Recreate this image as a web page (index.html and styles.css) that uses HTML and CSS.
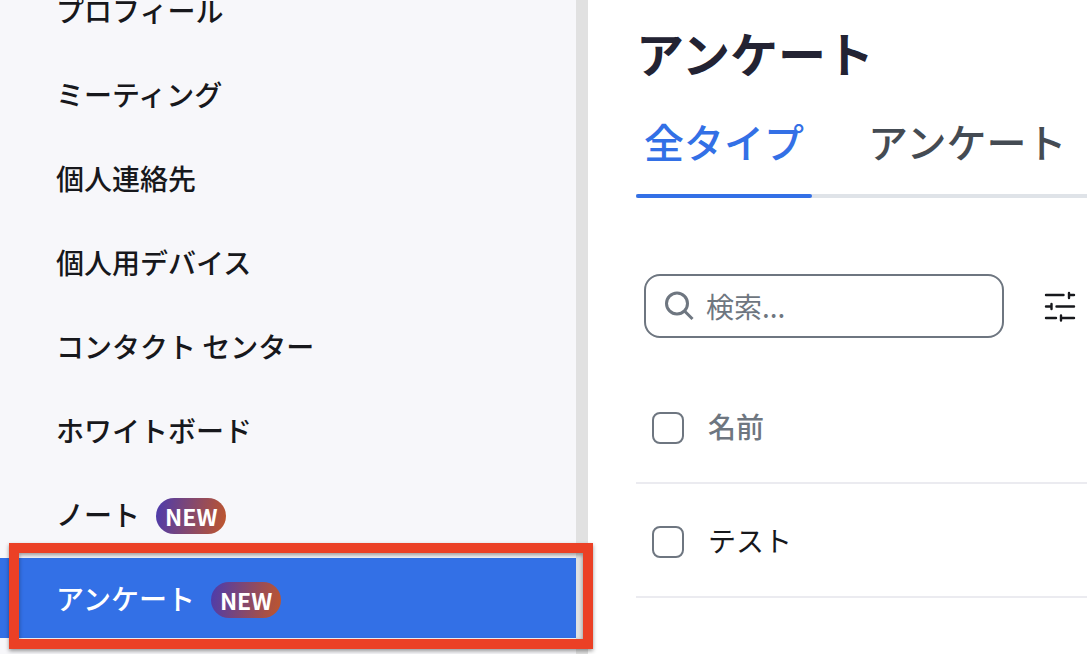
FILE: index.html
```html
<!DOCTYPE html>
<html lang="ja">
<head>
<meta charset="utf-8">
<meta name="viewport" content="width=device-width, initial-scale=1">
<title>アンケート</title>
<link rel="stylesheet" href="styles.css">
</head>
<body>
<div class="layout">
  <nav class="sidebar" aria-label="メニュー">
    <ul class="menu">
      <li><a class="menu-link" href="#">プロフィール</a></li>
      <li><a class="menu-link" href="#">ミーティング</a></li>
      <li><a class="menu-link" href="#">個人連絡先</a></li>
      <li><a class="menu-link" href="#">個人用デバイス</a></li>
      <li><a class="menu-link" href="#">コンタクト センター</a></li>
      <li><a class="menu-link" href="#">ホワイトボード</a></li>
      <li><a class="menu-link" href="#">ノート<span class="badge">NEW</span></a></li>
      <li class="highlighted"><a class="menu-link active" href="#" aria-current="page">アンケート<span class="badge">NEW</span></a></li>
    </ul>
  </nav>
  <main class="content">
    <h1 class="title">アンケート</h1>
    <div class="tabs" role="tablist">
      <button class="tab selected" type="button" role="tab" aria-selected="true">全タイプ</button>
      <button class="tab" type="button" role="tab" aria-selected="false">アンケート</button>
    </div>
    <div class="toolbar">
      <label class="search">
        <svg class="search-icon" viewBox="0 0 32 32" aria-hidden="true"><circle cx="13" cy="13.500" r="10.5"/><path d="M20.500 21 28.500 29"/></svg>
        <input class="search-input" type="search" placeholder="検索..." aria-label="検索">
      </label>
      <button class="filter" type="button" aria-label="フィルター">
        <svg class="filter-icon" viewBox="0 0 32 32" aria-hidden="true"><path d="M2 5H19.500M25 3V8M25 5H30M2 16.500H7.500M7.500 14V19M12.500 16.500H30M2 28H12M17 25.500V30.500M17 28H30"/></svg>
      </button>
    </div>
    <table class="table">
      <thead>
        <tr><th class="check-cell"><input class="check" type="checkbox" aria-label="すべて選択"></th><th class="name">名前</th></tr>
      </thead>
      <tbody>
        <tr><td class="check-cell"><input class="check" type="checkbox" aria-label="テストを選択"></td><td class="name">テスト</td></tr>
      </tbody>
    </table>
  </main>
</div>
</body>
</html>
```

FILE: styles.css
```css
* { box-sizing: border-box; }

body {
  margin: 0;
  overflow: hidden;
  background: #fff;
  color: #17181c;
  font-family: "Noto Sans CJK JP", sans-serif;
  font-size: 28px;
  line-height: 40px;
}

.layout {
  display: grid;
  grid-template-columns: 588px minmax(0, 1fr);
  min-height: 100vh;
}

.sidebar {
  background: #f7f7fa;
  border-right: 12px solid #e1e1e1;
}

/* The menu is scrolled part of the way past its first entry. */
.menu {
  display: grid;
  gap: 4px;
  margin: -30px 0 0;
  padding: 0;
  list-style: none;
}

.menu-link {
  display: flex;
  align-items: center;
  gap: 16px;
  height: 80px;
  padding: 0 56px;
  color: #17181c;
  font-weight: 500;
  text-decoration: none;
}

.menu-link.active {
  background: #3370e6;
  color: #fff;
}

.badge {
  margin-top: 4px;
  padding: 0 9px;
  border-radius: 18px;
  background: linear-gradient(100deg, #4b3bae, #c0562b);
  color: #fff;
  font-size: 23px;
  font-weight: 700;
  line-height: 36px;
}

.highlighted { position: relative; }

.highlighted::after {
  content: "";
  position: absolute;
  inset: -15px -17px -11px 9px;
  border: 10px solid #eb4025;
  box-shadow: 0 2px 4px rgba(0, 0, 0, 0.4), inset 0 2px 4px rgba(0, 0, 0, 0.4);
  pointer-events: none;
}

.content { padding: 16px 0 0 48px; }

.title {
  margin: 0;
  color: #232333;
  font-size: 48px;
  font-weight: 700;
  line-height: 72px;
}

.tabs {
  display: flex;
  gap: 48px;
  height: 110px;
  overflow: hidden;
  box-shadow: inset 0 -4px #dfe3e8;
}

.tab {
  flex: none;
  padding: 0 8px 4px;
  border: 0;
  background: none;
  color: #444b53;
  font: inherit;
  font-size: 40px;
  font-weight: 500;
}

.tab.selected {
  position: relative;
  color: #3370e6;
}

.tab.selected::after {
  content: "";
  position: absolute;
  inset: auto 0 0;
  height: 4px;
  border-radius: 2px;
  background: #3370e6;
}

.toolbar {
  display: flex;
  align-items: center;
  gap: 40px;
  padding: 76px 8px 32px;
}

.search {
  display: flex;
  align-items: center;
  gap: 10px;
  width: 360px;
  height: 64px;
  padding: 0 18px;
  border: 2px solid #6e7680;
  border-radius: 16px;
}

.search-icon {
  flex: none;
  width: 32px;
  height: 32px;
  fill: none;
  stroke: #6e7680;
  stroke-width: 3;
}

.search-input {
  flex: 1;
  min-width: 0;
  padding: 0;
  border: 0;
  outline: 0;
  background: none;
  color: #17181c;
  font: inherit;
}

.search-input::placeholder { color: #6e7680; opacity: 1; }

.filter {
  display: flex;
  padding: 0;
  border: 0;
  background: none;
}

.filter-icon {
  width: 32px;
  height: 32px;
  fill: none;
  stroke: #17181c;
  stroke-width: 2.4;
  stroke-linecap: round;
}

.table {
  width: 100%;
  border-collapse: separate;
  border-spacing: 0;
  table-layout: fixed;
}

.table th, .table td {
  height: 114px;
  padding: 0;
  border-bottom: 2px solid #ebebf0;
  text-align: left;
  vertical-align: middle;
}

.table .check-cell { width: 72px; padding: 4px 0 0 16px; }

.table th { color: #6e7680; font-weight: 500; }

.check {
  display: block;
  width: 32px;
  height: 32px;
  margin: 0;
  border: 2px solid #6e7680;
  border-radius: 8px;
  background: #fff;
  appearance: none;
}
```
